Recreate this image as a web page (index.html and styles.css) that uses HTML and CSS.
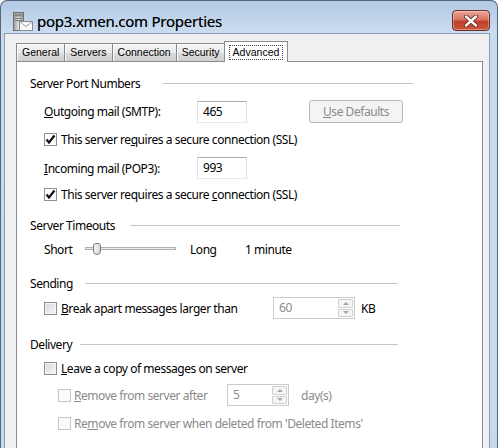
FILE: index.html
```html
<!DOCTYPE html>
<html>
<head>
<meta charset="utf-8">
<link rel="stylesheet" href="styles.css">
</head>
<body>
<div class="window">
  <div class="titlebar">
    <svg class="app-icon" width="22" height="22" viewBox="0 0 22 22">
      <defs>
        <linearGradient id="srv" x1="0" y1="0" x2="1" y2="0">
          <stop offset="0" stop-color="#9a9a9a"/>
          <stop offset="0.5" stop-color="#dedede"/>
          <stop offset="1" stop-color="#949494"/>
        </linearGradient>
      </defs>
      <rect x="1.5" y="1.5" width="10" height="18" fill="url(#srv)" stroke="#707070" stroke-width="1"/>
      <rect x="2.5" y="2.5" width="8" height="3" fill="#8a8a8a"/>
      <path d="M3 7.5h7M3 9.5h7" stroke="#7a7a7a" stroke-width="1"/>
      <rect x="7.5" y="10.5" width="13" height="9" fill="#f9f9f9" stroke="#8a8a8a" stroke-width="1"/>
      <path d="M7.5 10.5 L14 15.5 L20.5 10.5" fill="none" stroke="#a0a0a0" stroke-width="1"/>
    </svg>
    <span class="title">pop3.xmen.com Properties</span>
    <div class="close-btn">
      <svg width="14" height="12" viewBox="0 0 14 12">
        <path d="M2 1.5 L12 10.5 M12 1.5 L2 10.5" stroke="#5a1d14" stroke-width="4" stroke-linecap="round"/>
        <path d="M2 1.5 L12 10.5 M12 1.5 L2 10.5" stroke="#ffffff" stroke-width="2.4" stroke-linecap="round"/>
      </svg>
    </div>
  </div>
  <div class="client">
    <div class="tabs">
      <div class="tab">General</div>
      <div class="tab">Servers</div>
      <div class="tab">Connection</div>
      <div class="tab">Security</div>
      <div class="tab tab-active"><span class="focus">Advanced</span></div>
    </div>
    <div class="panel">
      <div class="group-head gh-ports">
        <span class="gh-label">Server Port Numbers</span><span class="gh-line"></span>
      </div>
      <div class="row row-out">
        <span class="field-label"><u>O</u>utgoing mail (SMTP):</span>
        <div class="textbox">465</div>
        <div class="btn-defaults"><u>U</u>se Defaults</div>
      </div>
      <div class="check-row cr-ssl1">
        <span class="cb cb-checked"><svg width="11" height="11" viewBox="0 0 11 11"><path d="M1.5 5.5 L4 8.5 L9.5 1.5" fill="none" stroke="#111" stroke-width="2.2"/></svg></span>
        <span>This server re<u>q</u>uires a secure connection (SSL)</span>
      </div>
      <div class="row row-in">
        <span class="field-label"><u>I</u>ncoming mail (POP3):</span>
        <div class="textbox">993</div>
      </div>
      <div class="check-row cr-ssl2">
        <span class="cb cb-checked"><svg width="11" height="11" viewBox="0 0 11 11"><path d="M1.5 5.5 L4 8.5 L9.5 1.5" fill="none" stroke="#111" stroke-width="2.2"/></svg></span>
        <span>This server requires a secure <u>c</u>onnection (SSL)</span>
      </div>

      <div class="group-head gh-timeouts">
        <span class="gh-label">Server Timeouts</span><span class="gh-line"></span>
      </div>
      <div class="row row-slider">
        <span class="short-label">Short</span>
        <div class="slider"><div class="track"></div><div class="thumb"></div></div>
        <span class="long-label">Long</span>
        <span>1 minute</span>
      </div>

      <div class="group-head gh-sending">
        <span class="gh-label">Sending</span><span class="gh-line"></span>
      </div>
      <div class="row row-break">
        <span class="cb"></span>
        <span class="break-label"><u>B</u>reak apart messages larger than</span>
        <div class="spin spin-kb">
          <span class="spin-val">60</span>
          <span class="spin-btns"><span class="sb sb-up"></span><span class="sb sb-down"></span></span>
        </div>
        <span class="unit-kb">KB</span>
      </div>

      <div class="group-head gh-delivery">
        <span class="gh-label">Delivery</span><span class="gh-line"></span>
      </div>
      <div class="check-row cr-leave">
        <span class="cb"></span>
        <span><u>L</u>eave a copy of messages on server</span>
      </div>
      <div class="row row-after disabled">
        <span class="cb cb-disabled"></span>
        <span class="after-label"><u>R</u>emove from server after</span>
        <div class="spin spin-days">
          <span class="spin-val">5</span>
          <span class="spin-btns"><span class="sb sb-up"></span><span class="sb sb-down"></span></span>
        </div>
        <span class="unit-days">day(s)</span>
      </div>
      <div class="check-row cr-deleted disabled">
        <span class="cb cb-disabled"></span>
        <span>Re<u>m</u>ove from server when deleted from 'Deleted Items'</span>
      </div>
    </div>
  </div>
</div>
</body>
</html>
```

FILE: styles.css
```css
* { box-sizing: border-box; }
html, body { margin: 0; padding: 0; }
body {
  width: 500px;
  height: 448px;
  overflow: hidden;
  background: #ffffff;
  font-family: "Noto Sans", "DejaVu Sans", sans-serif;
  font-size: 12px;
  letter-spacing: -0.45px;
  color: #000;
}
.window {
  width: 498px;
  height: 470px;
  display: flex;
  flex-direction: column;
  border: 1px solid #56657a;
  border-bottom: none;
  border-radius: 7px 7px 0 0;
  padding: 0 7px 0 3px;
  background: linear-gradient(180deg, #b2c9e4 0px, #c9dbef 30px, #c6d9ee 100%);
}
.titlebar {
  height: 32px;
  display: flex;
  align-items: flex-start;
  flex: none;
}
.app-icon { margin: 10px 0 0 8px; flex: none; }
.title {
  margin: 9px 0 0 3px;
  font-size: 15px;
  letter-spacing: -0.25px;
  line-height: 22px;
  color: #000;
  text-shadow: 0 0 0.5px rgba(0,0,0,0.6);
}
.close-btn {
  margin: 9px 0 0 auto;
  width: 38px;
  height: 21px;
  border: 1px solid #6b2a22;
  border-radius: 4px;
  background: linear-gradient(180deg, #e9a79a 0%, #d8745f 45%, #c2402a 55%, #c8553d 100%);
  box-shadow: inset 0 0 0 1px rgba(255,255,255,0.35);
  display: flex;
  align-items: center;
  justify-content: center;
}
.client {
  flex: 1;
  display: flex;
  flex-direction: column;
  background: #f0f0f0;
  border: 1px solid #8a9cb4;
  border-bottom: none;
  padding: 7px 6px 0 11px;
}
.tabs {
  display: flex;
  align-items: flex-end;
  height: 20px;
  position: relative;
  z-index: 1;
  font-family: "Liberation Sans", Arial, sans-serif;
  font-size: 10.5px;
  letter-spacing: 0;
}
.tab {
  height: 18px;
  padding: 0 5px;
  border: 1px solid #898c95;
  border-bottom: none;
  background: linear-gradient(180deg, #f3f3f3 0%, #ebebeb 50%, #dddddd 51%, #d0d0d0 100%);
  box-shadow: inset 1px 1px 0 #fbfbfb;
  line-height: 17px;
}
.tab + .tab { border-left: none; }
.tab-active {
  height: 21px;
  margin: 0 0 -1px -2px;
  padding: 2px 4px 0;
  border-left: 1px solid #898c95 !important;
  background: #ffffff;
  box-shadow: none;
}
.focus {
  display: inline-block;
  border: 1px dotted #444;
  padding: 0 3px;
  line-height: 13px;
}
.panel {
  flex: 1;
  background: #fff;
  border: 1px solid #898c95;
  padding: 0 0 0 13px;
}
.group-head {
  display: flex;
  align-items: center;
  height: 18px;
}
.gh-line { height: 1px; background: #c4c6c9; }
.gh-ports { margin-top: 12px; }
.gh-ports .gh-label { width: 133px; }
.gh-ports .gh-line { width: 250px; }
.gh-timeouts { margin-top: 14px; }
.gh-timeouts .gh-label { width: 100px; }
.gh-timeouts .gh-line { width: 270px; }
.gh-sending { margin-top: 17px; }
.gh-sending .gh-label { width: 55px; }
.gh-sending .gh-line { width: 313px; }
.gh-delivery { margin-top: 16px; }
.gh-delivery .gh-label { width: 50px; }
.gh-delivery .gh-line { width: 318px; }

.row {
  display: flex;
  align-items: center;
  margin-left: 14px;
}
.check-row {
  display: flex;
  align-items: center;
  height: 16px;
  margin-left: 14px;
}
.field-label { width: 153px; }
.textbox {
  width: 50px;
  height: 22px;
  border: 1px solid #abadb3;
  border-color: #abadb3 #dbdfe6 #e3e9ef #e2e3ea;
  padding-left: 5px;
  line-height: 20px;
}
.btn-defaults {
  margin-left: 62px;
  width: 94px;
  height: 23px;
  border: 1px solid #b5b5b5;
  border-radius: 3px;
  background: #f4f4f4;
  color: #8b8b8b;
  text-align: center;
  line-height: 21px;
}
.row-out { height: 23px; margin-top: 8px; }
.cr-ssl1 { margin-top: 8px; }
.row-in { height: 22px; margin-top: 10px; }
.cr-ssl2 { margin-top: 7px; }

.cb {
  flex: none;
  width: 13px;
  height: 13px;
  margin-right: 4px;
  border: 1px solid #8e8f8f;
  background: linear-gradient(135deg, #d6d8db 0%, #f6f6f6 100%);
  box-shadow: inset 0 0 0 1px #f4f4f4;
  display: flex;
  align-items: center;
  justify-content: center;
}
.cb-checked { background: #fff; box-shadow: none; }
.cb-disabled {
  border-color: #c5c5c5;
  background: #fbfbfb;
  box-shadow: none;
}

.row-slider { height: 16px; margin-top: 7px; }
.short-label { width: 41px; }
.slider {
  position: relative;
  width: 91px;
  height: 16px;
}
.track {
  position: absolute;
  left: 0; right: 0; top: 6px;
  height: 3px;
  border: 1px solid #b0b0b0;
  background: #e7eaea;
}
.thumb {
  position: absolute;
  left: 8px;
  top: 2px;
  width: 8px;
  height: 12px;
  border: 1px solid #7b7b7b;
  border-radius: 3px 3px 4px 4px;
  background: linear-gradient(90deg, #f4f4f4, #dadada);
}
.long-label { margin-left: 14px; width: 55px; }

.row-break { height: 22px; margin-top: 5px; }
.break-label { width: 212px; }
.spin {
  display: flex;
  height: 22px;
  border: 1px solid #cacaca;
  background: #fff;
  padding: 1px;
}
.spin-val {
  flex: 1;
  padding-left: 4px;
  color: #8d8d8d;
  line-height: 18px;
}
.spin-btns {
  width: 15px;
  display: flex;
  flex-direction: column;
  gap: 1px;
}
.sb {
  flex: 1;
  border: 1px solid #cfcfcf;
  border-radius: 1px;
  background: #f5f5f5;
  display: flex;
  align-items: center;
  justify-content: center;
}
.sb::after {
  content: "";
  border-left: 3px solid transparent;
  border-right: 3px solid transparent;
}
.sb-up::after { border-bottom: 3px solid #a8a8a8; }
.sb-down::after { border-top: 3px solid #a8a8a8; }
.spin-kb { width: 82px; }
.unit-kb { margin-left: 6px; }

.cr-leave { margin-top: 7px; }
.disabled { color: #8a8a8a; }
.row-after { height: 22px; margin-top: 8px; margin-left: 28px; }
.row-after .cb { margin-right: 3px; }
.after-label { width: 153px; }
.spin-days { width: 62px; }
.unit-days { margin-left: 12px; }
.cr-deleted { margin-top: 9px; margin-left: 28px; }
.cr-deleted .cb { margin-right: 3px; }
```
